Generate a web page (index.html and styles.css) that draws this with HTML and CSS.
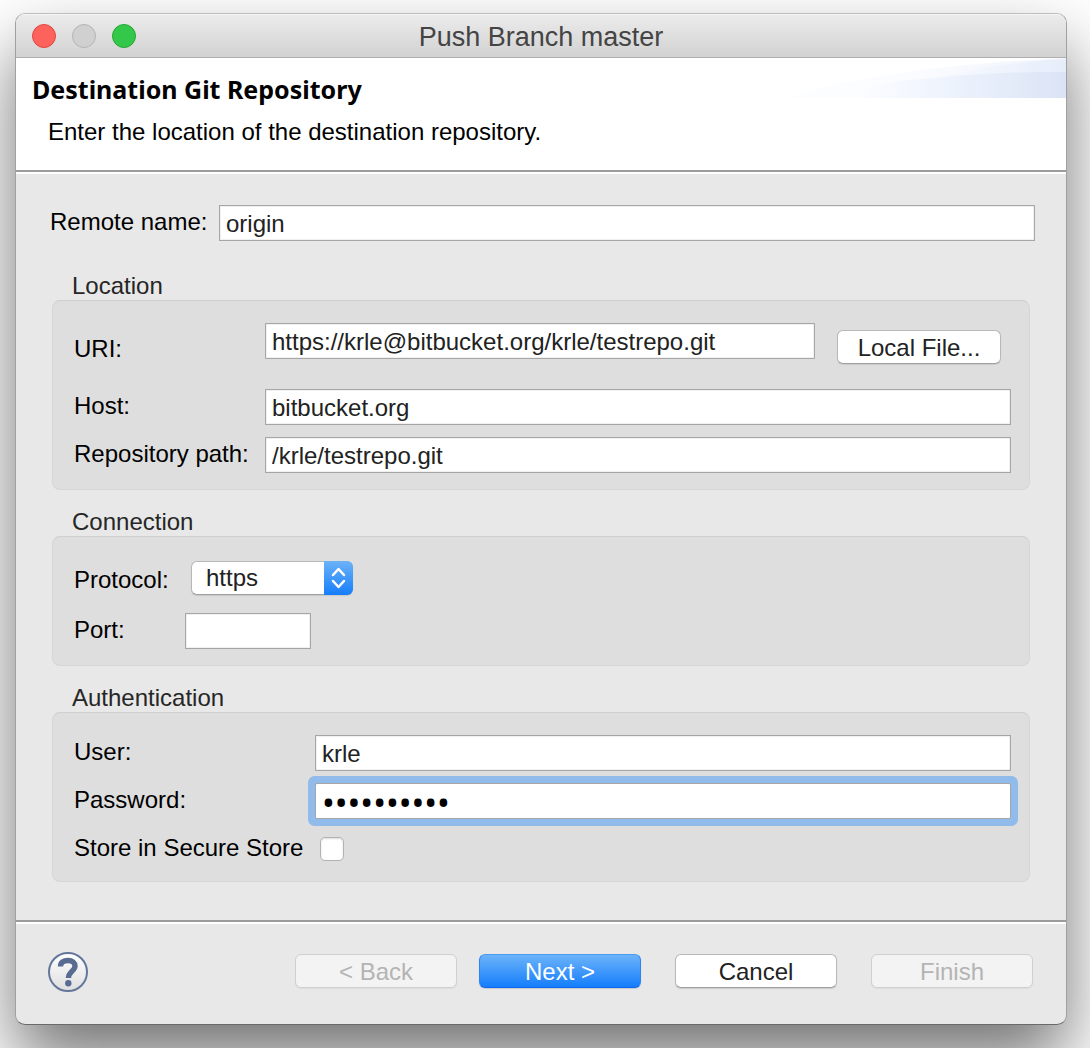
FILE: index.html
```html
<!DOCTYPE html>
<html lang="en">
<head>
<meta charset="utf-8">
<meta name="viewport" content="width=device-width, initial-scale=1">
<title>Push Branch master</title>
<link rel="stylesheet" href="styles.css">
</head>
<body>
<main class="window">
  <div class="titlebar">
    <div class="lights">
      <button class="light light-close" type="button" aria-label="Close"></button>
      <button class="light light-minimize" type="button" aria-label="Minimize" disabled></button>
      <button class="light light-zoom" type="button" aria-label="Zoom"></button>
    </div>
    <span class="title">Push Branch master</span>
  </div>

  <header class="banner">
    <div class="banner-text">
      <h1 class="banner-heading">Destination Git Repository</h1>
      <p class="banner-message">Enter the location of the destination repository.</p>
    </div>
    <svg class="banner-art" viewBox="0 0 280 40" aria-hidden="true">
      <defs>
        <linearGradient id="fade" x1="0" x2="1" y1="0" y2="0">
          <stop offset="0" stop-color="#fcfdff"/>
          <stop offset="0.4" stop-color="#f8faff"/>
          <stop offset="1" stop-color="#e6edfa"/>
        </linearGradient>
        <linearGradient id="fade-deep" x1="0" x2="1" y1="0" y2="0">
          <stop offset="0" stop-color="#fcfdff"/>
          <stop offset="0.4" stop-color="#eff4fd"/>
          <stop offset="1" stop-color="#dbe4f6"/>
        </linearGradient>
      </defs>
      <path d="M0 40C70 18 160 6 280 0V40Z" fill="url(#fade)" opacity="0.6"/>
      <path d="M60 40C90 26 130 22 165 17C200 8 240 3 280 1V40Z" fill="url(#fade)"/>
      <path d="M70 40C80 25 120 22 150 20C190 15 230 14 280 14V40Z" fill="url(#fade-deep)"/>
    </svg>
  </header>

  <form id="push-form" class="form">
    <div class="remote">
      <label class="label" for="remote">Remote name:</label>
      <input class="field" id="remote" type="text" value="origin">
    </div>

    <section class="group" aria-labelledby="g-location">
      <h2 class="group-title" id="g-location">Location</h2>
      <div class="box">
        <div class="row row-uri">
          <label class="label label-low" for="uri">URI:</label>
          <input class="field" id="uri" type="text" value="https://krle@bitbucket.org/krle/testrepo.git">
          <button class="button button-file" type="button">Local File...</button>
        </div>
        <div class="row">
          <label class="label" for="host">Host:</label>
          <input class="field" id="host" type="text" value="bitbucket.org">
        </div>
        <div class="row">
          <label class="label" for="path">Repository path:</label>
          <input class="field" id="path" type="text" value="/krle/testrepo.git">
        </div>
      </div>
    </section>

    <section class="group" aria-labelledby="g-connection">
      <h2 class="group-title" id="g-connection">Connection</h2>
      <div class="box box-connection">
        <div class="row">
          <label class="label label-low" for="protocol">Protocol:</label>
          <div class="popup">
            <select class="popup-select" id="protocol"><option>https</option></select>
            <svg class="popup-arrows" viewBox="0 0 29 34" aria-hidden="true">
              <path d="M9 14L14.500 8L20 14M9 20L14.500 26L20 20" fill="none" stroke="#fff" stroke-width="2.500" stroke-linecap="round" stroke-linejoin="round"/>
            </svg>
          </div>
        </div>
        <div class="row">
          <label class="label" for="port">Port:</label>
          <input class="field field-port" id="port" type="text">
        </div>
      </div>
    </section>

    <section class="group" aria-labelledby="g-auth">
      <h2 class="group-title" id="g-auth">Authentication</h2>
      <div class="box box-auth">
        <div class="row">
          <label class="label" for="user">User:</label>
          <input class="field" id="user" type="text" value="krle">
        </div>
        <div class="row">
          <label class="label" for="password">Password:</label>
          <input class="field field-password" id="password" type="password" value="abcdefghij">
        </div>
        <div class="row">
          <label class="label" for="store">Store in Secure Store</label>
          <input class="check" id="store" type="checkbox">
        </div>
      </div>
    </section>
  </form>

  <footer class="actions">
    <button class="help" type="button" aria-label="Help">
      <svg class="help-icon" viewBox="0 0 40 40" aria-hidden="true">
        <defs>
          <linearGradient id="help-fill" x1="0" x2="0" y1="0" y2="1">
            <stop offset="0" stop-color="#ffffff"/>
            <stop offset="1" stop-color="#dedede"/>
          </linearGradient>
        </defs>
        <circle cx="20" cy="20" r="19" fill="url(#help-fill)" stroke="#64779a" stroke-width="2"/>
        <path d="M12.500 14.500C12.500 10.500 15.500 8.500 20 8.500C24.500 8.500 27 10.800 27 14C27 19 20.500 19.500 20.500 26" fill="none" stroke="#586c92" stroke-width="5.400"/>
        <circle cx="20.300" cy="31.300" r="3.200" fill="#586c92"/>
      </svg>
    </button>
    <div class="action-buttons">
      <div class="steps">
        <button class="button" type="button" disabled>&lt; Back</button>
        <button class="button button-default" type="button">Next &gt;</button>
      </div>
      <button class="button" type="button">Cancel</button>
      <button class="button" type="submit" form="push-form" disabled>Finish</button>
    </div>
  </footer>
</main>
</body>
</html>
```
FILE: styles.css
```css
* {
  box-sizing: border-box;
}

body {
  margin: 0;
  padding: 13px 23px 23px 15px;
  background: #fff;
  color: #000;
  font: 24px/28px "Liberation Sans", Arial, sans-serif;
}

button,
input,
select {
  margin: 0;
  font: inherit;
  color: #222;
}

h1,
h2,
p {
  margin: 0;
  font-weight: normal;
}

.window {
  overflow: hidden;
  border: 1px solid #a0a0a0;
  border-top-color: #bdbdbd;
  border-bottom-color: #6a6a6a;
  border-radius: 10px;
  background: #e8e8e8;
  box-shadow: 0 36px 70px rgba(0, 0, 0, 0.55);
}

/* Title bar */

.titlebar {
  display: grid;
  grid-template-columns: 1fr auto 1fr;
  align-items: center;
  padding: 10px 16px 9px;
  border-bottom: 1px solid #aeaeae;
  background: linear-gradient(#ececec, #d2d2d2);
  box-shadow: inset 0 1px #f6f6f6;
}

.lights {
  display: flex;
  gap: 16px;
}

.light {
  width: 24px;
  height: 24px;
  padding: 0;
  border: 1px solid #e2463f;
  border-radius: 50%;
  background: #fe625c;
}

.light-minimize {
  border-color: #b4b4b4;
  background: #d0d0d0;
}

.light-zoom {
  border-color: #24a833;
  background: #34c84a;
}

.title {
  padding-top: 2px;
  color: #444;
  font-size: 27px;
  line-height: 22px;
}

/* Banner */

.banner {
  display: flex;
  justify-content: space-between;
  border-bottom: 2px solid #9c9c9c;
  background: #fff;
}

.banner-text {
  padding: 15px 0 24px 16px;
}

.banner-heading {
  margin-bottom: 13px;
  font: bold 25px/32px "Noto Sans", sans-serif;
}

.banner-message {
  padding-left: 16px;
}

.banner-art {
  width: 280px;
  height: 40px;
}

/* Form */

.form {
  padding: 31px 31px 38px 34px;
  border-top: 2px solid #fff;
  border-bottom: 2px solid #9c9c9c;
}

.remote {
  display: grid;
  grid-template-columns: 169px 1fr;
  align-items: center;
}

.label {
  padding-bottom: 2px;
}

.label-low {
  padding: 4px 0 0;
}

.field {
  width: 100%;
  min-width: 0;
  height: 36px;
  padding: 2px 6px 0;
  border: 1px solid #a6a6a6;
  border-radius: 0;
  outline: 0;
  background: #fff;
  box-shadow: inset 0 0 0 1px #f0f0f0;
}

.group {
  margin: 18px 5px 0 2px;
}

.remote + .group {
  margin-top: 31px;
}

.group-title {
  padding-left: 20px;
  color: #262626;
  font-size: 24px;
}

.box {
  display: flex;
  flex-direction: column;
  gap: 12px;
  padding: 22px 18px 16px 21px;
  border: 1px solid #d6d6d6;
  border-top-color: #cecece;
  border-radius: 8px;
  background: #dedede;
}

.row {
  display: grid;
  grid-template-columns: 191px 1fr;
  align-items: center;
}

.row-uri {
  grid-template-columns: 191px 1fr auto;
  min-height: 48px;
  margin-bottom: 6px;
}

.row-uri .field {
  align-self: start;
}

.button-file {
  margin: 0 10px 0 22px;
}

.box-connection {
  gap: 18px;
  padding-top: 24px;
}

.box-connection .row {
  grid-template-columns: 111px 1fr;
}

.field-port {
  width: 126px;
}

.box-auth {
  padding-bottom: 14px;
}

.box-auth .row {
  grid-template-columns: 241px 1fr;
  min-height: 36px;
}

.field-password {
  border-radius: 2px;
  box-shadow: 0 0 0 7px #90bbea;
  color: #000;
  font-family: "Noto Sans", sans-serif;
  font-size: 34px;
}

.check {
  width: 24px;
  height: 24px;
  margin-left: 5px;
  appearance: none;
  border: 1px solid #b2b2b2;
  border-radius: 5px;
  background: #fff;
  box-shadow: inset 0 1px 2px #ddd;
}

/* Pop-up menu */

.popup {
  display: grid;
  width: 162px;
  margin-left: 6px;
}

.popup-select,
.popup-arrows {
  grid-area: 1 / 1;
}

.popup-select {
  height: 34px;
  padding: 0 32px 0 14px;
  appearance: none;
  border: 1px solid #b8b8b8;
  border-bottom-color: #a0a0a0;
  border-radius: 6px;
  background: #fff;
  box-shadow: 0 1px 1px #c8c8c8;
}

.popup-arrows {
  justify-self: end;
  width: 29px;
  height: 34px;
  border-radius: 0 6px 6px 0;
  background: linear-gradient(#6cb2f8, #157efb);
  pointer-events: none;
}

/* Buttons */

.button {
  min-width: 162px;
  height: 34px;
  padding: 1px 18px 0;
  border: 1px solid #b8b8b8;
  border-bottom-color: #a0a0a0;
  border-radius: 6px;
  background: #fff;
  box-shadow: 0 1px 1px #cacaca;
}

.button-file {
  min-width: 164px;
}

.button:disabled {
  border-color: #d0d0d0;
  background: #f3f3f3;
  box-shadow: 0 1px 1px #dcdcdc;
  color: #b4b4b4;
}

.button-default {
  border-color: #4a9bf2 #2b84f5 #0f66f0;
  background: linear-gradient(#6cb3fa, #157efb);
  color: #fff;
}

.actions {
  display: flex;
  align-items: center;
  justify-content: space-between;
  padding: 28px 33px 32px 32px;
  border-top: 2px solid #fff;
}

.help {
  width: 40px;
  height: 40px;
  padding: 0;
  border: 0;
  background: none;
}

.help-icon {
  display: block;
  width: 40px;
  height: 40px;
}

.action-buttons {
  display: flex;
  gap: 34px;
  padding-bottom: 2px;
}

.steps {
  display: flex;
  gap: 22px;
}
```
